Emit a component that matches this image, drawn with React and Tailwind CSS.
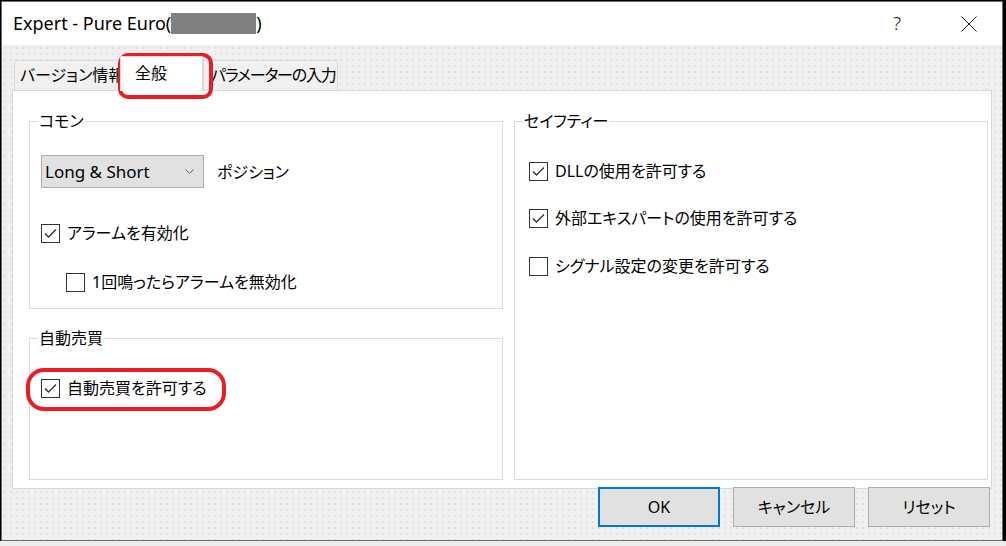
import React from "react";

const UI = "[font-family:'Noto_Sans','Noto_Sans_CJK_JP',sans-serif] [font-feature-settings:'palt']";

function CheckBox({ checked, label, className = "" }) {
  return (
    <div className={`flex items-center gap-[7px] ${className}`}>
      <span className="flex h-[19px] w-[19px] shrink-0 items-center justify-center border border-[#333333] bg-white">
        {checked ? (
          <svg width="17" height="17" viewBox="0 0 17 17" fill="none">
            <path d="M3 8.5 L6.5 12 L14 4.5" stroke="#333333" strokeWidth="1.4" />
          </svg>
        ) : null}
      </span>
      <span className="whitespace-nowrap text-[16px] leading-[20px] text-black">{label}</span>
    </div>
  );
}

function Group({ title, className = "", children }) {
  return (
    <div className={`relative border border-[#dcdcdc] bg-white ${className}`}>
      <span className="absolute -top-[11px] left-[8px] bg-white px-[1px] text-[16px] leading-[20px] text-black">
        {title}
      </span>
      {children}
    </div>
  );
}

function Tab({ label, active, className = "" }) {
  if (active) {
    return (
      <div
        className={`relative z-10 -mb-[1px] h-[35px] whitespace-nowrap border border-b-0 border-[#d9d9d9] bg-white pt-[5px] text-[16px] leading-[22px] ${className}`}
      >
        {label}
      </div>
    );
  }
  return (
    <div
      className={`h-[30px] shrink-0 whitespace-nowrap border border-b-0 border-[#d9d9d9] bg-[#f0f0f0] pt-[3px] text-[16px] leading-[22px] ${className}`}
    >
      {label}
    </div>
  );
}

function Button({ label, primary }) {
  return (
    <button
      className={`h-[40px] w-[122px] bg-[#e1e1e1] text-[16px] text-black ${
        primary ? "border-2 border-[#0078d7]" : "border border-[#adadad]"
      }`}
    >
      {label}
    </button>
  );
}

export default function App() {
  return (
    <div className={`relative flex h-[546px] w-[1006px] flex-col overflow-hidden bg-[#ececec] ${UI}`}>
      <div className="flex h-[541px] bg-black pt-[1px]">
        <div className="w-[1px]" />
        <div className="flex h-[540px] w-[1002px] flex-col border border-[#6b6b6b] bg-white">
          {/* title bar */}
          <div className="flex h-[43px] shrink-0 items-center bg-white pl-[11px] text-[18px] text-black">
            <span>Expert - Pure Euro(</span>
            <span className="h-[21px] w-[85px] bg-[#808080]" />
            <span>)</span>
            <span className="ml-auto mr-[60px] text-[19px] font-light text-[#222]">?</span>
            <svg className="mr-[25px]" width="16" height="16" viewBox="0 0 16 16">
              <path d="M0.5 0.5 L15.5 15.5 M15.5 0.5 L0.5 15.5" stroke="#111" strokeWidth="1" />
            </svg>
          </div>

          {/* body */}
          <div className="flex flex-1 flex-col bg-[#f0f0f0] bg-[radial-gradient(circle,#dadada_0.6px,transparent_0.9px)] bg-[length:6px_6px] pt-[11px]">
            <div className="ml-[12px] flex h-[34px] items-end">
              <Tab label="バージョン情報" className="w-[108px] pl-[5px]" />
              <Tab label="全般" active className="-ml-[2px] w-[83px] shrink-0 pl-[14px]" />
              <Tab label="パラメーターの入力" className="w-[135px] pl-[7px] tracking-[-1.2px]" />
            </div>

            <div className="ml-[10px] flex h-[399px] w-[980px] gap-[11px] border border-[#d9d9d9] bg-white pl-[16px] pt-[30px]">
              <div className="flex w-[474px] flex-col gap-[29px]">
                <Group title="コモン" className="h-[188px] pl-[11px] pt-[33px]">
                  <div className="flex items-center gap-[13px]">
                    <div className="flex h-[33px] w-[163px] items-center justify-between border border-[#adadad] bg-[#e1e1e1] pl-[3px] pr-[9px] text-[17px]">
                      <span>Long &amp; Short</span>
                      <svg width="9" height="5" viewBox="0 0 9 5" fill="none">
                        <path d="M0.5 0.5 L4.5 4.5 L8.5 0.5" stroke="#606060" strokeWidth="1" />
                      </svg>
                    </div>
                    <span className="text-[16px]">ポジション</span>
                  </div>
                  <CheckBox checked label="アラームを有効化" className="mt-[35px]" />
                  <CheckBox label="1回鳴ったらアラームを無効化" className="ml-[25px] mt-[29px]" />
                </Group>
                <Group title="自動売買" className="h-[142px] pl-[11px] pt-[39px]">
                  <CheckBox checked label="自動売買を許可する" />
                </Group>
              </div>
              <Group title="セイフティー" className="h-[359px] w-[474px] pl-[14px] pt-[39px]">
                <CheckBox checked label="DLLの使用を許可する" />
                <CheckBox checked label="外部エキスパートの使用を許可する" className="mt-[27px]" />
                <CheckBox label="シグナル設定の変更を許可する" className="mt-[28px]" />
              </Group>
            </div>

            <div className="-mt-[2px] flex justify-end gap-[13px] pr-[12px]">
              <Button label="OK" primary />
              <Button label="キャンセル" />
              <Button label="リセット" />
            </div>
          </div>
        </div>
        <div className="flex-1" />
      </div>

      {/* red annotation marks */}
      <div className="absolute left-[118px] top-[53px] h-[46px] w-[95px] rounded-[10px] border-4 border-[#ec1c24]" />
      <div className="absolute left-[26px] top-[368px] h-[43px] w-[200px] rounded-[18px] border-4 border-[#ec1c24]" />
    </div>
  );
}
